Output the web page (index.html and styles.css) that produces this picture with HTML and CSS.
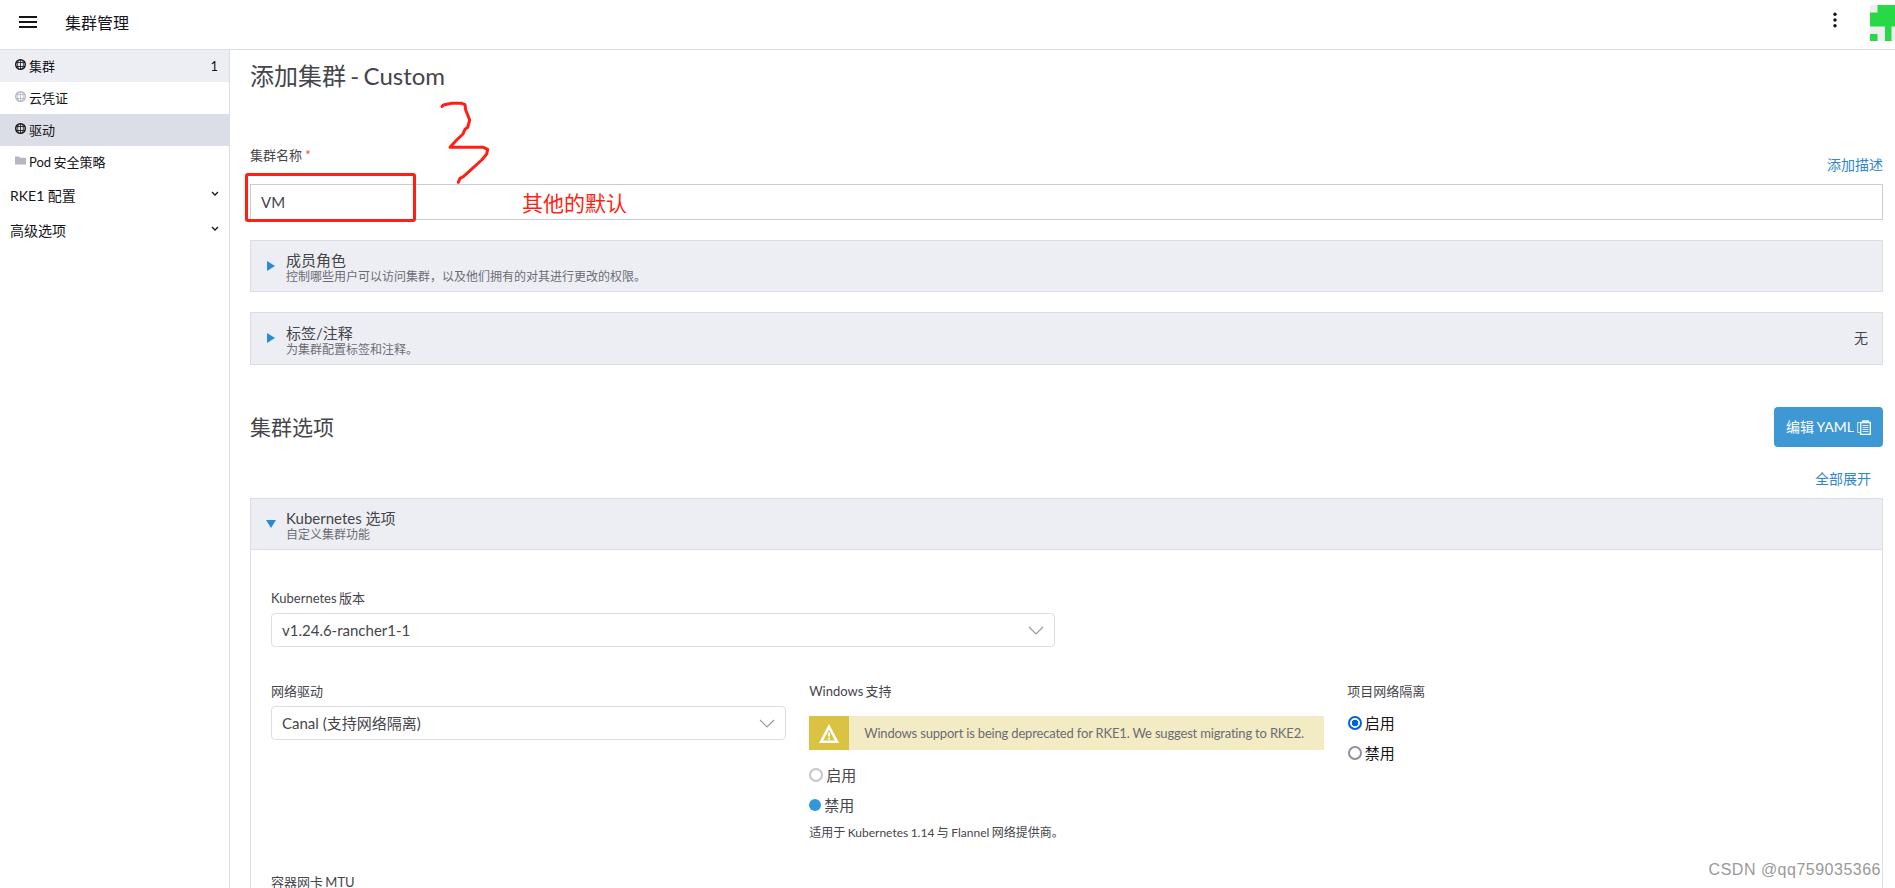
FILE: index.html
```
<!DOCTYPE html>
<html lang="zh-CN">
<head>
    <meta charset="UTF-8">
    <meta name="viewport" content="width=device-width, initial-scale=1.0">
    <title>集群管理</title>
    <link rel="stylesheet" href="styles.css">
</head>
<body>
    <header class="header">
        <svg class="menu-icon" width="18" height="12" viewBox="0 0 18 12"><path d="M0 1h18M0 6h18M0 11h18" stroke="#141419" stroke-width="2"/></svg>
        <h1>集群管理</h1>
        <svg class="dots" width="4" height="16" viewBox="0 0 4 16" fill="#141419"><circle cx="2" cy="2.3" r="1.7"/><circle cx="2" cy="8" r="1.7"/><circle cx="2" cy="13.7" r="1.7"/></svg>
        <svg class="avatar" width="25" height="36" viewBox="0 0 25 36"><path fill="#eee" d="M0 0h25v36H0z"/><path fill="#28d946" d="M7.5 0H25v21.5h-3.500V36H15V21.500H0V7.500h7.500zM0 29h7.500v7H0z"/></svg>
    </header>
    <div class="layout">
        <nav class="sidebar">
            <a class="nav-item active">
                <svg class="nav-icon dark" viewBox="0 0 11 11"><circle cx="5.500" cy="5.500" r="4.800" stroke-width="1.400"/><path d="M1 3.500h9M1 7.500h9M5.500 1v9M3.300 1.500Q1.800 5.500 3.300 9.500M7.700 1.500q1.500 4 0 8"/></svg>
                <span>集群</span><span class="count">1</span>
            </a>
            <a class="nav-item">
                <svg class="nav-icon" viewBox="0 0 11 11"><circle cx="5.500" cy="5.500" r="4.800" stroke-width="1.400"/><path d="M1 3.500h9M1 7.500h9M5.500 1v9M3.300 1.500Q1.800 5.500 3.300 9.500M7.700 1.500q1.500 4 0 8"/></svg>
                <span>云凭证</span>
            </a>
            <a class="nav-item hover">
                <svg class="nav-icon dark" viewBox="0 0 11 11"><circle cx="5.500" cy="5.500" r="4.800" stroke-width="1.400"/><path d="M1 3.500h9M1 7.500h9M5.500 1v9M3.300 1.500Q1.800 5.500 3.300 9.500M7.700 1.500q1.500 4 0 8"/></svg>
                <span>驱动</span>
            </a>
            <a class="nav-item">
                <svg class="nav-icon folder" viewBox="0 0 11 11"><path d="M0 1.500h4l1 1.300h6V9.500H0z"/></svg>
                <span>Pod 安全策略</span>
            </a>
            <div class="nav-group"><span>RKE1 配置</span><svg width="8" height="6" viewBox="0 0 8 6"><path d="M1 1l3 3 3-3"/></svg></div>
            <div class="nav-group"><span>高级选项</span><svg width="8" height="6" viewBox="0 0 8 6"><path d="M1 1l3 3 3-3"/></svg></div>
        </nav>
        <main class="main">
            <h2 class="page-title">添加集群 - Custom</h2>
            <div class="name-row">
                <label class="label">集群名称 <span class="required">*</span></label>
                <a class="link">添加描述</a>
            </div>
            <input class="name-input" type="text" value="VM">

            <section class="accordion">
                <i class="arrow"></i>
                <div>
                    <h3>成员角色</h3>
                    <p>控制哪些用户可以访问集群，以及他们拥有的对其进行更改的权限。</p>
                </div>
            </section>
            <section class="accordion labels">
                <i class="arrow"></i>
                <div>
                    <h3>标签/注释</h3>
                    <p>为集群配置标签和注释。</p>
                </div>
                <span class="none">无</span>
            </section>

            <div class="options-row">
                <h2>集群选项</h2>
                <button class="btn"><span>编辑 YAML</span>
                    <svg width="14" height="15" viewBox="0 0 14 15" fill="none" stroke="#fff"><path d="M3 12.500H.700V2.500H3M3 2.500h2" opacity=".8"/><path d="M3.700 2.500h9.600v11.800H3.700z" stroke-width="1.300"/><path d="M6 2.300V1h5v1.300" stroke-width="1.600"/><path d="M5.500 5.500h6M5.500 7.500h6M5.500 9.500h6M5.500 11.500h6" opacity=".8"/></svg>
                </button>
            </div>
            <div class="expand-row"><a class="link">全部展开</a></div>

            <section class="accordion open">
                <i class="arrow down"></i>
                <div>
                    <h3>Kubernetes 选项</h3>
                    <p>自定义集群功能</p>
                </div>
            </section>
            <div class="accordion-body">
                <label class="label">Kubernetes 版本</label>
                <div class="select version">
                    <span>v1.24.6-rancher1-1</span>
                    <svg width="16" height="9" viewBox="0 0 16 9"><path d="M1 1l7 7 7-7"/></svg>
                </div>
                <div class="columns">
                    <div>
                        <label class="label">网络驱动</label>
                        <div class="select">
                            <span>Canal (支持网络隔离)</span>
                            <svg width="16" height="9" viewBox="0 0 16 9"><path d="M1 1l7 7 7-7"/></svg>
                        </div>
                    </div>
                    <div>
                        <label class="label">Windows 支持</label>
                        <div class="banner">
                            <div class="banner-icon">
                                <svg width="20" height="19" viewBox="0 0 20 19"><path d="M10 0l10 19H0z" fill="#fff"/><path d="M10 5.500l5.800 11H4.200z" fill="#dac342"/><path d="M10 8.500v4M10 13.700v1.800" stroke="#fff" stroke-width="2"/></svg>
                            </div>
                            <span>Windows support is being deprecated for RKE1. We suggest migrating to RKE2.</span>
                        </div>
                        <div class="radio"><i class="circle"></i>启用</div>
                        <div class="radio"><i class="circle filled"></i>禁用</div>
                        <p class="note">适用于 Kubernetes 1.14 与 Flannel 网络提供商。</p>
                    </div>
                    <div class="isolation">
                        <label class="label">项目网络隔离</label>
                        <div class="radio"><i class="circle checked"></i>启用</div>
                        <div class="radio"><i class="circle"></i>禁用</div>
                    </div>
                </div>
                <label class="label mtu">容器网卡 MTU</label>
            </div>
        </main>
    </div>

    <!-- red notes drawn over the form -->
    <div class="mark-box"></div>
    <svg class="mark-three" width="60" height="90" viewBox="0 0 60 90"><path d="M7 9.500L8.300 8l8.400-1.700h10L30 7.700l.7 5.300 2 5 2 5-2 7.300-2.700 2-2 4.700-6.300 6L15 50.300h33.300l4.400 2-1 4.700-5 6L35 73.700l-6.700 6-3.300 1.600-1.700 4"/></svg>
    <div class="mark-text">其他的默认</div>
    <div class="watermark">CSDN @qq759035366</div>
</body>
</html>
```
FILE: styles.css
```
* {
    margin: 0;
    padding: 0;
    box-sizing: border-box;
}

body {
    height: 888px;
    overflow: hidden;
    position: relative;
    background: #fff;
    color: #141419;
    font-family: Lato, "Noto Sans CJK SC", sans-serif;
    font-size: 14px;
}

svg {
    display: block;
    flex-shrink: 0;
}

h1, h2, h3 {
    font-weight: 400;
}

.header {
    display: flex;
    align-items: center;
    height: 50px;
    padding-left: 19px;
    border-bottom: 1px solid #dcdee7;
}

.menu-icon {
    margin-top: -5px;
}

.header h1 {
    flex: 1;
    margin-left: 28px;
    margin-top: -4px;
    font-size: 16px;
    line-height: 24px;
}

.dots {
    margin-right: 33px;
    margin-top: -9px;
}

.avatar {
    margin-top: -3px;
}

.layout {
    display: flex;
    height: 838px;
}

.sidebar {
    width: 230px;
    flex-shrink: 0;
    border-right: 1px solid #dcdee7;
}

.nav-item {
    display: flex;
    align-items: center;
    height: 32px;
    padding: 0 11px 0 15px;
    font-size: 13px;
    line-height: 20px;
    word-spacing: -1px;
}

.nav-item.active {
    background: #edeef3;
}

.nav-item.hover {
    background: #dcdee7;
}

.nav-icon {
    width: 11px;
    height: 11px;
    margin-right: 3px;
    margin-top: -3px;
    fill: none;
    stroke: #b6b6c2;
    stroke-width: 0.800;
}

.nav-icon.dark {
    stroke: #141419;
}

.nav-icon.folder {
    fill: #b6b6c2;
    stroke: none;
}

.count {
    margin-left: auto;
    font-size: 13px;
}

.nav-group {
    display: flex;
    align-items: center;
    justify-content: space-between;
    height: 35px;
    padding: 0 10px;
    font-size: 14px;
    line-height: 20px;
}

.nav-group svg {
    fill: none;
    stroke: #141419;
    stroke-width: 1.300;
    margin-top: -4px;
}

.main {
    flex: 1;
    padding: 11px 12px 0 20px;
    color: #45454b;
}

.page-title {
    height: 30px;
    font-size: 24px;
    line-height: 30px;
    word-spacing: -1.800px;
}

.name-row {
    display: flex;
    justify-content: space-between;
    margin-top: 54px;
    height: 39px;
}

.label {
    display: block;
    height: 20px;
    font-size: 13px;
    line-height: 20px;
    white-space: nowrap;
    word-spacing: -1px;
}

.required {
    margin-left: 1px;
    color: #f64747;
}

.link {
    color: #3085cb;
    font-size: 14px;
    line-height: 20px;
}

.name-row .link {
    margin-top: 10px;
}

.name-input {
    display: block;
    width: 100%;
    height: 36px;
    padding: 0 10px;
    border: 1px solid #cacad8;
    background: #fff;
    color: #45454b;
    font: inherit;
    font-size: 15px;
}

.accordion {
    display: flex;
    height: 52px;
    margin-top: 20px;
    padding: 10px 14px 0 16px;
    border: 1px solid #dcdee7;
    background: #edeef3;
}

.accordion.labels {
    height: 53px;
    padding-top: 11px;
}

.accordion h3 {
    height: 18px;
    font-size: 15px;
    line-height: 18px;
}

.accordion p {
    height: 16px;
    font-size: 12px;
    line-height: 16px;
    color: #6c6c76;
}

.arrow {
    width: 0;
    height: 0;
    margin: 10px 11px 0 0;
    border-left: 8px solid #278bd3;
    border-top: 5px solid transparent;
    border-bottom: 5px solid transparent;
}

.labels .arrow {
    margin-top: 9px;
}

.arrow.down {
    margin: 11px 10px 0 -1px;
    border-top: 8px solid #278bd3;
    border-left: 5px solid transparent;
    border-right: 5px solid transparent;
    border-bottom: 0;
}

.none {
    margin-left: auto;
    margin-top: 4px;
    line-height: 20px;
}

.options-row {
    display: flex;
    align-items: center;
    justify-content: space-between;
    height: 40px;
    margin-top: 42px;
}

.options-row h2 {
    margin-top: -2px;
    font-size: 21px;
}

.btn {
    display: flex;
    align-items: center;
    justify-content: center;
    gap: 3px;
    width: 109px;
    height: 40px;
    border: none;
    border-radius: 4px;
    background: #3d98d3;
    color: #fff;
    font: inherit;
    white-space: nowrap;
    word-spacing: -1px;
}

.btn span {
    margin-top: -2px;
}

.expand-row {
    display: flex;
    justify-content: flex-end;
    height: 51px;
    padding: 22px 12px 0 0;
}

.accordion.open {
    margin-top: 0;
    padding-top: 10px;
}

.accordion-body {
    height: 338px;
    padding: 38px 20px 0;
    border: 1px solid #dcdee7;
    border-width: 0 1px;
}

.select {
    display: flex;
    align-items: center;
    justify-content: space-between;
    height: 34px;
    margin-top: 5px;
    padding: 0 10px;
    border: 1px solid #dcdee7;
    border-radius: 4px;
    font-size: 15px;
    line-height: 20px;
}

.select svg {
    fill: none;
    stroke: #959da1;
    stroke-width: 1.200;
}

.select.version {
    width: 784px;
}

.columns {
    display: grid;
    grid-template-columns: repeat(3, minmax(0, 1fr));
    gap: 23.500px;
    height: 191px;
    margin-top: 34px;
}

.banner {
    display: flex;
    align-items: center;
    height: 34px;
    margin-top: 15px;
    margin-bottom: 10px;
    background: #f3ebc3;
    color: #6c6c76;
    font-size: 13px;
    white-space: nowrap;
}

.banner span {
    margin-top: -1px;
    padding-left: 15px;
    letter-spacing: -0.180px;
}

.banner-icon {
    display: flex;
    align-items: center;
    justify-content: center;
    width: 40px;
    height: 34px;
    background: #dac342;
}

.radio {
    display: flex;
    align-items: center;
    height: 30px;
    font-size: 15px;
    line-height: 20px;
}

.circle {
    width: 14px;
    height: 14px;
    margin-right: 3px;
    border: 2px solid #c5c5cd;
    border-radius: 50%;
}

.circle.filled {
    width: 12px;
    height: 12px;
    border: none;
    background: #3497da;
}

.note {
    margin-top: 3px;
    font-size: 12px;
    line-height: 20px;
    word-spacing: -0.600px;
}

.mtu {
    height: 16px;
}

.isolation .label {
    margin-bottom: 7px;
}

.isolation .radio {
    padding-left: 0.500px;
    color: #141419;
}

.isolation .circle {
    border-color: #8f8f9d;
}

.isolation .circle.checked {
    border-color: #0060df;
    background: radial-gradient(#0060df 3px, #fff 3.600px);
}

.mark-box {
    position: absolute;
    left: 245px;
    top: 173px;
    width: 171px;
    height: 49px;
    border: 3px solid #ff1f14;
    border-radius: 3px;
}

.mark-three {
    position: absolute;
    left: 435px;
    top: 97px;
    fill: none;
    stroke: #ff1f14;
    stroke-width: 3;
    stroke-linecap: round;
    stroke-linejoin: round;
}

.mark-text {
    position: absolute;
    left: 522px;
    top: 188px;
    color: #ff1f14;
    font-size: 21px;
    line-height: 30px;
}

.watermark {
    position: absolute;
    right: 14px;
    bottom: 6px;
    color: #999;
    font-family: "Liberation Sans", Arial, sans-serif;
    font-size: 16px;
    line-height: 24px;
    letter-spacing: 0.500px;
}
```
